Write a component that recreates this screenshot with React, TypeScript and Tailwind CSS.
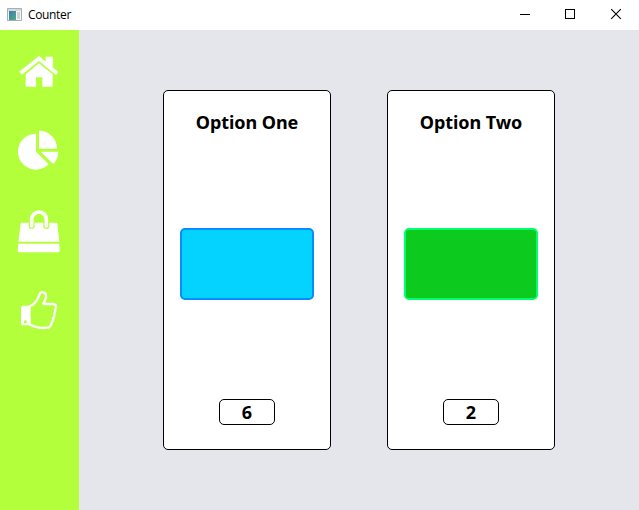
import type { ReactNode } from "react";

function NavIcon({ box, children }: { box: string; children: ReactNode }) {
  return (
    <button className="block h-20 w-[79px]">
      <svg viewBox={box} className="block h-20 w-[79px]" fill="white">
        {children}
      </svg>
    </button>
  );
}

function Card({ title, value, color }: { title: string; value: number; color: string }) {
  return (
    <section className="flex h-[360px] w-[168px] flex-col items-center rounded-[5px] border border-black bg-white pt-[18px]">
      <h2 className="h-[26px] whitespace-nowrap text-[18px] leading-[26px] font-bold tracking-[-0.05px]">{title}</h2>
      <button className={"mt-[93px] h-[72px] w-[134.5px] rounded-[5px] border-2 " + color} />
      <div className="mt-[99px] flex h-[26px] w-14 items-center justify-center rounded-[5px] border border-black text-[18px] leading-6 font-bold">
        {value}
      </div>
    </section>
  );
}

export default function App() {
  return (
    <div className="flex h-[510px] w-[639px] flex-col overflow-hidden bg-[#e5e6eb] font-['Noto_Sans',sans-serif] text-black">
      <header className="flex h-[30px] items-center bg-white">
        <svg className="ml-[7px] h-[14px] w-4" viewBox="0 0 16 14">
          <defs>
            <linearGradient id="pane" x1="0" y1="0" x2="1" y2="1">
              <stop offset="0" stopColor="#3b79b5" />
              <stop offset="1" stopColor="#4faf81" />
            </linearGradient>
          </defs>
          <path d="M.5.5h14v12H.5z" fill="#f5f5f5" stroke="#a9adb0" />
          <path d="M1 1h13v2H1z" fill="#d7dadd" />
          <path d="M2 3h7v9H2z" fill="url(#pane)" />
          <path d="M10 4h3v7h-3z" fill="#d2d5d8" />
        </svg>
        <span className="ml-[5px] font-['Open_Sans',sans-serif] text-[12px] leading-4 tracking-[-0.35px]">Counter</span>
        <svg className="ml-auto h-[30px] w-[138px]" viewBox="0 0 138 30" fill="none" stroke="black">
          <path d="M19 14.5h10M64.500 9.500h9v9h-9z" shapeRendering="crispEdges" />
          <path d="M110.200 9.200l9.600 9.600m0-9.600l-9.600 9.600" strokeWidth="1.100" />
        </svg>
      </header>
      <div className="flex flex-1">
        <nav className="w-[79px] bg-[#b4ff3b]">
          <NavIcon box="-30 -45 237 240">
            <path
              d="M87 34l21 18V36h20v32l16 13-6 8-51-42-51 41-7-8z"
              stroke="white"
              strokeWidth="2"
              strokeLinejoin="round"
            />
            <path d="M87 55l41 33v37H97V97H78v28H47V88z" />
          </NavIcon>
          <NavIcon box="-30 -30 237 240">
            <path d="M78 41v54l38 38A54 54 0 1 1 78 41z" />
            <path d="M87 32a54 54 0 0 1 54 54H87z" />
            <path d="M92 95h53a54 54 0 0 1-15 37z" />
          </NavIcon>
          <NavIcon box="-30 -30 237 240">
            <path d="M36 68h103q3 0 3 3l6 54H25l7-54q1-3 4-3z" />
            <path d="M25 131h123l1 20q0 6-5 6H28q-5 0-5-6z" />
            <g fill="none" strokeLinecap="round">
              <path d="M65 78V58a22 22 0 0 1 44 0v20" stroke="#b4ff3b" strokeWidth="18" />
              <path d="M65 78V58a22 22 0 0 1 44 0v20" stroke="white" strokeWidth="11" />
            </g>
          </NavIcon>
          <NavIcon box="-30 -30 237 240">
            <path fillRule="evenodd" d="M38 77h24v59H38q-5 0-5-5V82q0-5 5-5zm8 44a4.500 4.500 0 1 0 0 9 4.500 4.500 0 0 0 0-9z" />
            <path
              d="M58 80q17-8 25-24l7-16q4-6 12-2 9 4 5 17l-7 17h29q9 0 9 8t-3 9q2 7-2 13 1 8-3 12 0 10-5 14-2 15-14 15-29 4-53-10"
              fill="none"
              stroke="white"
              strokeWidth="7"
              strokeLinejoin="round"
              strokeLinecap="round"
            />
          </NavIcon>
        </nav>
        <main className="flex flex-1 justify-center gap-14 pt-[60px]">
          <Card title="Option One" value={6} color="border-[#078cff] bg-[#04d3ff]" />
          <Card title="Option Two" value={2} color="border-[#00ff6c] bg-[#0ccb1e]" />
        </main>
      </div>
    </div>
  );
}
